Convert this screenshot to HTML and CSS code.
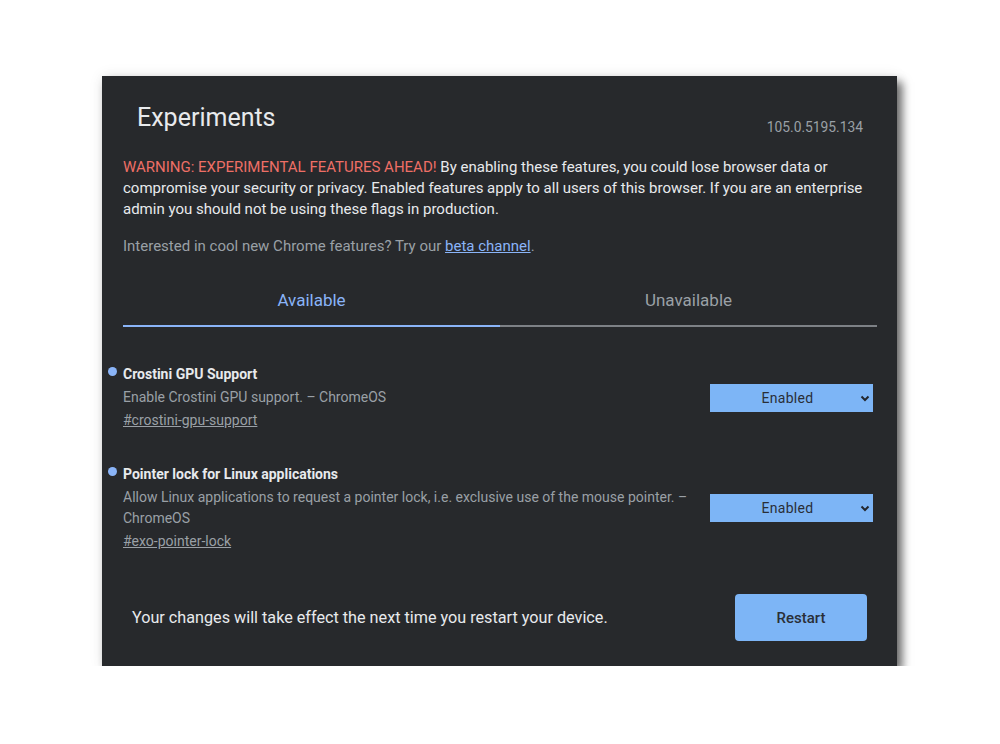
FILE: index.html
```html
<!DOCTYPE html>
<html lang="en">
<head>
<meta charset="utf-8">
<title>Experiments</title>
<link rel="stylesheet" href="styles.css">
</head>
<body>
<div class="panel">
  <div class="header">
    <h1 class="title">Experiments</h1>
    <div class="version">105.0.5195.134</div>
  </div>
  <p class="warning"><span class="warn-red">WARNING: EXPERIMENTAL FEATURES AHEAD!</span> By enabling these features, you could lose browser data or compromise your security or privacy. Enabled features apply to all users of this browser. If you are an enterprise admin you should not be using these flags in production.</p>
  <p class="interest">Interested in cool new Chrome features? Try our <a class="beta" href="#">beta channel</a>.</p>
  <div class="tabs">
    <div class="tab active">Available</div>
    <div class="tab">Unavailable</div>
  </div>
  <div class="experiments">
    <div class="exp">
      <div class="exp-text">
        <div class="exp-title">Crostini GPU Support</div>
        <div class="exp-desc">Enable Crostini GPU support. – ChromeOS</div>
        <a class="exp-link" href="#">#crostini-gpu-support</a>
      </div>
      <div class="select"><span class="select-label">Enabled</span><svg class="chev" width="10" height="7" viewBox="0 0 10 7"><path d="M1.5 1.5 L5 5 L8.5 1.5" fill="none" stroke="#23272e" stroke-width="2"/></svg></div>
    </div>
    <div class="exp">
      <div class="exp-text">
        <div class="exp-title">Pointer lock for Linux applications</div>
        <div class="exp-desc">Allow Linux applications to request a pointer lock, i.e. exclusive use of the mouse pointer. – ChromeOS</div>
        <a class="exp-link" href="#">#exo-pointer-lock</a>
      </div>
      <div class="select"><span class="select-label">Enabled</span><svg class="chev" width="10" height="7" viewBox="0 0 10 7"><path d="M1.5 1.5 L5 5 L8.5 1.5" fill="none" stroke="#23272e" stroke-width="2"/></svg></div>
    </div>
  </div>
  <div class="footer">
    <div class="footer-msg">Your changes will take effect the next time you restart your device.</div>
    <button class="restart">Restart</button>
  </div>
</div>
</body>
</html>
```

FILE: styles.css
```css
html, body {
  margin: 0;
  padding: 0;
  background: #ffffff;
}
body {
  font-family: Roboto, "Liberation Sans", Arial, sans-serif;
}
.panel {
  margin: 76px 0 0 102px;
  width: 795px;
  height: 590px;
  box-sizing: border-box;
  padding: 26px 20px 25px 21px;
  background: #27292c;
  box-shadow: 5px 6px 9px rgba(0, 0, 0, 0.6), 0 0 14px rgba(0, 0, 0, 0.08);
  display: flex;
  flex-direction: column;
}
.header {
  display: flex;
  justify-content: space-between;
  align-items: flex-start;
  padding: 0 14px;
}
.title {
  margin: 0;
  font-size: 25px;
  line-height: 32px;
  font-weight: 400;
  color: #e8eaed;
}
.version {
  margin-top: 15px;
  font-size: 13.8px;
  line-height: 20px;
  color: #9aa0a6;
}
.warning {
  margin: 20px 0 0;
  font-size: 15px;
  line-height: 21px;
  color: #e8eaed;
}
.warn-red {
  color: #ee6f66;
}
.interest {
  margin: 16px 0 0;
  font-size: 15px;
  line-height: 21px;
  color: #9aa0a6;
}
.beta {
  color: #8ab4f8;
  text-decoration: underline;
}
.tabs {
  display: flex;
  margin-top: 31px;
}
.tab {
  flex: 1;
  text-align: center;
  font-size: 17px;
  line-height: 24px;
  padding-bottom: 13px;
  color: #9aa0a6;
  border-bottom: 2px solid #7d8186;
}
.tab.active {
  color: #8ab4f8;
  border-bottom-color: #8ab4f8;
}
.experiments {
  margin-top: 37px;
  display: flex;
  flex-direction: column;
  gap: 33px;
}
.exp {
  display: flex;
  align-items: center;
}
.exp-text {
  flex: 1;
  display: flex;
  flex-direction: column;
  align-items: flex-start;
}
.exp-title {
  position: relative;
  font-size: 14px;
  line-height: 20px;
  font-weight: 700;
  color: #e8eaed;
}
.exp-title::before {
  content: "";
  position: absolute;
  left: -15px;
  top: 3px;
  width: 9px;
  height: 9px;
  border-radius: 50%;
  background: #8ab4f8;
}
.exp-desc {
  margin-top: 3px;
  font-size: 14px;
  line-height: 21px;
  color: #9aa0a6;
}
.exp-link {
  margin-top: 2px;
  font-size: 14px;
  line-height: 21px;
  color: #9aa0a6;
  text-decoration: underline;
}
.select {
  margin-left: 10px;
  margin-right: 4px;
  width: 163px;
  height: 28px;
  box-sizing: border-box;
  background: #7db5f6;
  display: flex;
  align-items: center;
  justify-content: center;
  position: relative;
  padding-right: 8px;
}
.select-label {
  font-size: 14px;
  letter-spacing: 0.3px;
  color: #2a2f38;
}
.chev {
  position: absolute;
  right: 3px;
  top: 11px;
}
.footer {
  margin-top: auto;
  display: flex;
  align-items: center;
  justify-content: space-between;
  padding: 0 10px 0 9px;
}
.footer-msg {
  font-size: 16.2px;
  line-height: 22px;
  color: #e8eaed;
}
.restart {
  width: 132px;
  height: 47px;
  border: none;
  border-radius: 4px;
  background: #7db5f6;
  color: #2a2f38;
  font-family: Roboto, "Liberation Sans", Arial, sans-serif;
  font-size: 15px;
  font-weight: 500;
  padding: 0;
}
```
